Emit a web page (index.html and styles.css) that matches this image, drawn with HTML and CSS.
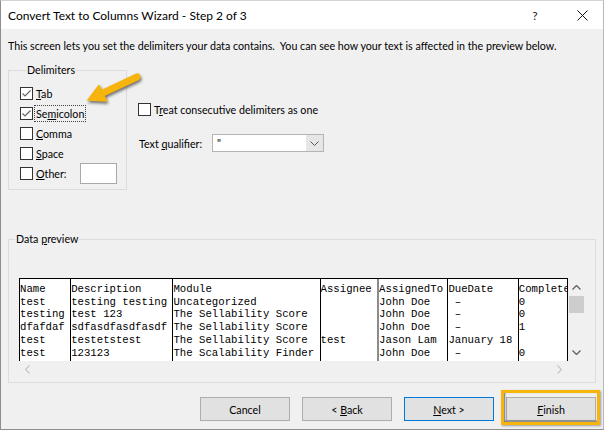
FILE: index.html
```html
<!DOCTYPE html>
<html lang="en">
<head>
    <meta charset="UTF-8">
    <title>Convert Text to Columns Wizard</title>
    <link rel="stylesheet" href="styles.css">
</head>
<body>
    <div class="window">
        <div class="titlebar">
            <span class="title">Convert Text to Columns Wizard - Step 2 of 3</span>
            <span class="help">?</span>
            <svg class="close" width="11" height="11" viewBox="0 0 11 11"><path d="M0.5 0.5 L10.5 10.5 M10.5 0.5 L0.5 10.5" stroke="#111" stroke-width="1"/></svg>
        </div>

        <div class="content">
            <p class="intro">This screen lets you set the delimiters your data contains.&nbsp; You can see how your text is affected in the preview below.</p>

            <div class="upper">
                <fieldset class="group delims">
                    <legend>Delimiters</legend>
                    <div class="check">
                        <span class="box"><svg width="11" height="11" viewBox="0 0 11 11"><polyline points="1.5,5.5 4,8 9.5,2.5" fill="none" stroke="#666" stroke-width="1.2"/></svg></span>
                        <span class="lbl"><u>T</u>ab</span>
                    </div>
                    <div class="check">
                        <span class="box"><svg width="11" height="11" viewBox="0 0 11 11"><polyline points="1.5,5.5 4,8 9.5,2.5" fill="none" stroke="#666" stroke-width="1.2"/></svg></span>
                        <span class="lbl focus">Se<u>m</u>icolon</span>
                    </div>
                    <div class="check">
                        <span class="box"></span>
                        <span class="lbl"><u>C</u>omma</span>
                    </div>
                    <div class="check">
                        <span class="box"></span>
                        <span class="lbl"><u>S</u>pace</span>
                    </div>
                    <div class="check">
                        <span class="box"></span>
                        <span class="lbl"><u>O</u>ther:</span>
                        <span class="other-input"></span>
                    </div>
                </fieldset>

                <div class="options">
                    <div class="check">
                        <span class="box"></span>
                        <span class="lbl">T<u>r</u>eat consecutive delimiters as one</span>
                    </div>
                    <div class="qualifier">
                        <span class="qual-label">Text <u>q</u>ualifier:</span>
                        <div class="combo">
                            <span class="combo-value">"</span>
                            <span class="combo-btn"><svg width="9" height="5" viewBox="0 0 9 5"><polyline points="0.5,0.5 4.5,4.5 8.5,0.5" fill="none" stroke="#555" stroke-width="1"/></svg></span>
                        </div>
                    </div>
                </div>

                <!-- callout arrow pointing at Semicolon -->
                <svg class="arrow" width="70" height="44" viewBox="0 0 70 44">
                    <line x1="21" y1="27.8" x2="57" y2="11" stroke="#f6b40c" stroke-width="7" stroke-linecap="round"/>
                    <polygon points="8,34 19,19.5 26.5,35" fill="#f6b40c" stroke="#f6b40c" stroke-width="1.5" stroke-linejoin="round"/>
                </svg>
            </div>

            <fieldset class="group preview">
                <legend>Data <u>p</u>review</legend>
                <div class="pv-body">
                    <div class="grid-wrap">
                        <div class="grid">
                            <div class="col w8">
                                <div>Name</div><div>test</div><div>testing</div><div>dfafdaf</div><div>test</div><div>test</div>
                            </div>
                            <div class="col w16">
                                <div>Description</div><div>testing testing</div><div>test 123</div><div>sdfasdfasdfasdf</div><div>testetstest</div><div>123123</div>
                            </div>
                            <div class="col w23">
                                <div>Module</div><div>Uncategorized</div><div>The Sellability Score</div><div>The Sellability Score</div><div>The Sellability Score</div><div>The Scalability Finder</div>
                            </div>
                            <div class="col w9">
                                <div>Assignee</div><div>&nbsp;</div><div>&nbsp;</div><div>&nbsp;</div><div>test</div><div>&nbsp;</div>
                            </div>
                            <div class="col w11 sel">
                                <div>AssignedTo</div><div>John Doe</div><div>John Doe</div><div>John Doe</div><div>Jason Lam</div><div>John Doe</div>
                            </div>
                            <div class="col w11">
                                <div>DueDate</div><div> –</div><div> –</div><div> –</div><div>January 18</div><div> –</div>
                            </div>
                            <div class="col last">
                                <div>Complete</div><div>0</div><div>0</div><div>1</div><div>&nbsp;</div><div>0</div>
                            </div>
                        </div>
                        <div class="vscroll">
                            <span class="sb-btn"><svg width="9" height="5" viewBox="0 0 9 5"><polyline points="0.5,4.5 4.5,0.5 8.5,4.5" fill="none" stroke="#606060" stroke-width="1.3"/></svg></span>
                            <span class="thumb"></span>
                            <span class="sb-fill"></span>
                            <span class="sb-btn"><svg width="9" height="5" viewBox="0 0 9 5"><polyline points="0.5,0.5 4.5,4.5 8.5,0.5" fill="none" stroke="#606060" stroke-width="1.3"/></svg></span>
                        </div>
                    </div>
                    <div class="hscroll">
                        <span class="sb-btn"><svg width="5" height="9" viewBox="0 0 5 9"><polyline points="4.5,0.5 0.5,4.5 4.5,8.5" fill="none" stroke="#c4c4c4" stroke-width="1.2"/></svg></span>
                        <span class="sb-btn"><svg width="5" height="9" viewBox="0 0 5 9"><polyline points="0.5,0.5 4.5,4.5 0.5,8.5" fill="none" stroke="#c4c4c4" stroke-width="1.2"/></svg></span>
                    </div>
                </div>
            </fieldset>

            <div class="buttons">
                <button class="btn">Cancel</button>
                <button class="btn">&lt; <u>B</u>ack</button>
                <button class="btn default"><u>N</u>ext &gt;</button>
                <button class="btn finish"><u>F</u>inish</button>
            </div>
        </div>
    </div>
</body>
</html>
```

FILE: styles.css
```css
body {
    margin: 0;
    font-family: Lato, 'Liberation Sans', sans-serif;
    font-size: 10.7px;
    color: #000;
}

.window {
    width: 604px;
    height: 430px;
    box-sizing: border-box;
    border: 1px solid #8e8e8e;
    border-top-color: #d4d4d4;
    border-right-color: #b8b8b8;
    background-color: #f0f0f0;
    display: flex;
    flex-direction: column;
}

.titlebar {
    height: 28px;
    background-color: white;
    display: flex;
    align-items: center;
    padding-left: 7px;
    font-size: 12px;
}

.title {
    flex: 1;
}

.help {
    width: 16px;
    text-align: center;
    color: #222;
    margin-right: 34px;
}

.close {
    margin-right: 15px;
}

.content {
    flex: 1;
    padding: 0 7px 0 7px;
    display: flex;
    flex-direction: column;
}

.intro {
    margin: 9px 0 0;
    line-height: 16px;
    white-space: nowrap;
}

.upper {
    display: flex;
    align-items: flex-start;
    margin-top: 8px;
    position: relative;
}

fieldset.group {
    margin: 0;
    padding: 0;
    border: 1px solid #dcdcdc;
    min-width: 0;
}

fieldset.group legend {
    margin-left: 6px;
    padding: 0 1px;
    line-height: 16px;
}

.delims {
    width: 119px;
    box-sizing: border-box;
    padding: 5px 9px 6px 11px !important;
}

.check {
    display: flex;
    align-items: center;
    height: 20px;
}

.box {
    width: 13px;
    height: 13px;
    box-sizing: border-box;
    border: 1px solid #333;
    background-color: white;
    margin-right: 1px;
    flex: none;
}

.box svg {
    display: block;
}

.lbl {
    border: 1px dotted transparent;
    padding: 0 1px;
    line-height: 15px;
    white-space: nowrap;
}

.lbl.focus {
    border-color: #444;
}

.other-input {
    margin-left: auto;
    width: 37px;
    height: 21px;
    box-sizing: border-box;
    border: 1px solid #a9a9a9;
    background-color: white;
}

.options {
    margin-left: 11px;
    padding-top: 37px;
}

.qualifier {
    display: flex;
    align-items: center;
    height: 20px;
    margin-top: 14px;
}

.qual-label {
    width: 74px;
    padding-left: 1px;
    box-sizing: border-box;
}

.combo {
    width: 112px;
    height: 18px;
    box-sizing: border-box;
    border: 1px solid #b4b4b4;
    background-color: white;
    display: flex;
}

.combo-value {
    flex: 1;
    padding-left: 4px;
    line-height: 15px;
}

.combo-btn {
    width: 17px;
    background-color: #e6e6e6;
    display: flex;
    align-items: center;
    justify-content: center;
}

.arrow {
    position: absolute;
    left: 72px;
    top: 4px;
    filter: drop-shadow(1px 2px 1.5px rgba(0, 0, 0, 0.55));
}

.preview {
    margin-top: 41px !important;
}

.pv-body {
    margin: 31px 0 0 10px;
    padding-bottom: 4px;
}

.grid-wrap {
    display: flex;
    height: 83px;
}

.grid {
    width: 549px;
    box-sizing: border-box;
    background-color: white;
    border-top: 1px solid #000;
    border-right: 1px solid #000;
    display: flex;
    font-family: 'Liberation Mono', monospace;
    font-size: 10.67px;
    line-height: 12.7px;
    overflow: hidden;
}

.col {
    box-sizing: border-box;
    border-left: 1px solid #000;
    padding-top: 4px;
    overflow: hidden;
    flex: none;
}

.col div {
    white-space: pre;
}

.w8 { width: 8ch; }
.w9 { width: 9ch; }
.w11 { width: 11ch; }
.w16 { width: 16ch; }
.w23 { width: 23ch; }

.col.sel {
    border-left: 2px solid #8c8c8c;
}

.col.last {
    flex: 1;
}

.vscroll {
    width: 17px;
    display: flex;
    flex-direction: column;
    padding-top: 1px;
}

.sb-btn {
    height: 17px;
    flex: none;
    display: flex;
    align-items: center;
    justify-content: center;
}

.thumb {
    height: 17px;
    margin: 0 1px;
    background-color: #cdcdcd;
}

.sb-fill {
    flex: 1;
}

.hscroll {
    width: 549px;
    height: 17px;
    display: flex;
    justify-content: space-between;
}

.hscroll .sb-btn {
    width: 17px;
}

.buttons {
    display: flex;
    justify-content: flex-end;
    gap: 12px;
    margin-top: 14px;
}

.btn {
    width: 90px;
    height: 24px;
    padding: 0;
    font-family: inherit;
    font-size: 10.7px;
    color: #000;
    background-color: #e1e1e1;
    border: 1px solid #adadad;
    border-radius: 0;
}

.btn.default {
    border-color: #0078d7;
}

.btn.finish {
    position: relative;
}

/* yellow highlight drawn over the Finish button */
.btn.finish::after {
    content: '';
    position: absolute;
    top: -8px;
    left: -6px;
    right: -5px;
    bottom: -5px;
    border: 3px solid #f6b40c;
    box-shadow: inset 1px -1px 2px rgba(0, 0, 0, 0.55), 1px 1px 2px rgba(0, 0, 0, 0.35);
}
```
